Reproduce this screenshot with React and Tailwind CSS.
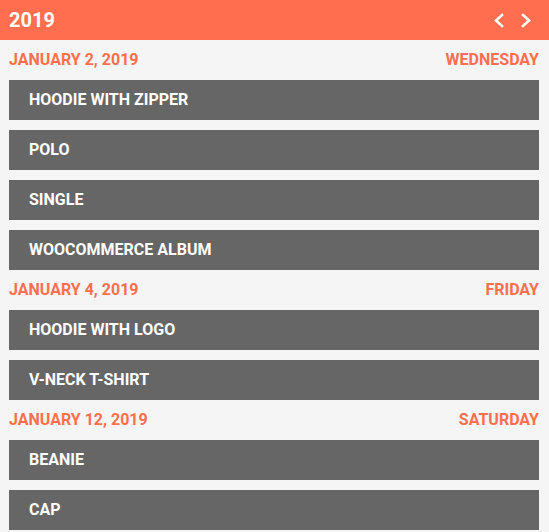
import React from "react";

const groups = [
    { date: "JANUARY 2, 2019", day: "WEDNESDAY", items: ["HOODIE WITH ZIPPER", "POLO", "SINGLE", "WOOCOMMERCE ALBUM"] },
    { date: "JANUARY 4, 2019", day: "FRIDAY", items: ["HOODIE WITH LOGO", "V-NECK T-SHIRT"] },
    { date: "JANUARY 12, 2019", day: "SATURDAY", items: ["BEANIE", "CAP"] },
];

function Chevron({ dir }) {
    return (
        <svg width="12" height="15" viewBox="0 0 12 15" fill="none">
            <polyline
                points={dir === "left" ? "9,2 3,7.5 9,13" : "3,2 9,7.5 3,13"}
                stroke="white"
                strokeWidth="2.6"
                strokeLinecap="square"
            />
        </svg>
    );
}

export default function App() {
    return (
        <div className="min-h-[532px] bg-[#f5f5f5]" style={{ fontFamily: "Roboto, sans-serif" }}>
            <div className="h-10 bg-[#ff6f4f] flex items-center justify-between pl-[9px] pr-[17px]">
                <span className="text-white font-bold text-[20px]">2019</span>
                <div className="flex items-center gap-[15px]">
                    <Chevron dir="left" />
                    <Chevron dir="right" />
                </div>
            </div>
            <div className="pl-[9px] pr-[10px] pb-[2px]">
                {groups.map((g) => (
                    <div key={g.date}>
                        <div className="h-10 flex items-center justify-between text-[16px] font-bold text-[#ff6f4f]">
                            <span>{g.date}</span>
                            <span>{g.day}</span>
                        </div>
                        <div className="flex flex-col gap-[10px]">
                            {g.items.map((it) => (
                                <div key={it} className="h-10 bg-[#666666] flex items-center pl-5 text-white font-bold text-[16px]">
                                    {it}
                                </div>
                            ))}
                        </div>
                    </div>
                ))}
            </div>
        </div>
    );
}
